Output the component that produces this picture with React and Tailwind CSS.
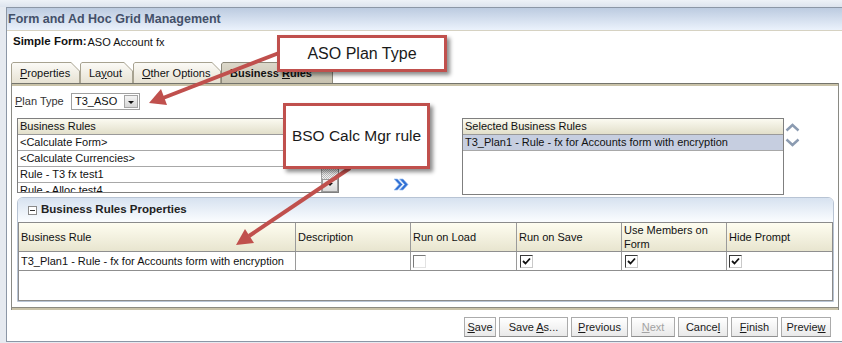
import React from 'react'

function Tab({ className, active, children }) {
  return (
    <div
      className={`h-[21px] p-px pb-0 [clip-path:polygon(0_2px,2px_0,calc(100%_-_9px)_0,100%_9px,100%_100%,0_100%)] ${
        active ? 'bg-[#8d897a]' : 'bg-[#a7a290]'
      } ${className}`}
    >
      <div
        className={`h-full flex items-center pl-[8px] [clip-path:polygon(0_1px,1px_0,calc(100%_-_8px)_0,100%_8px,100%_100%,0_100%)] bg-linear-to-b ${
          active ? 'from-[#dcd8ca] to-[#c8c2b0] font-bold' : 'from-[#fbfaf6] to-[#e7e2d3]'
        }`}
      >
        {children}
      </div>
    </div>
  )
}

function Check({ on }) {
  return (
    <div
      className={`w-[13px] h-[13px] bg-white border ${
        on ? 'border-t-[#3a3a3a] border-l-[#3a3a3a] border-r-[#c9c9c9] border-b-[#c9c9c9]' : 'border-t-[#7a7a7a] border-l-[#7a7a7a] border-r-[#e2e2e2] border-b-[#e2e2e2]'
      }`}
    >
      {on && (
        <svg width="11" height="11" viewBox="0 0 11 11">
          <polyline points="2,5 4.5,7.5 9,2.5" fill="none" stroke="#111" strokeWidth="1.8" />
        </svg>
      )}
    </div>
  )
}

function Btn({ className, disabled, children }) {
  return (
    <div
      className={`h-[20px] border border-[#ababab] border-b-[#8f8f8f] bg-linear-to-b from-[#ffffff] to-[#e9e9e9] flex items-center justify-center ${
        disabled ? 'text-[#a3a3a3]' : 'text-[#1a1a1a]'
      } ${className}`}
    >
      <span className="whitespace-pre">{children}</span>
    </div>
  )
}

const listHead =
  'h-[16px] border-b border-[#9a9a9a] bg-linear-to-b from-[#fbfaf1] to-[#e2dfca] pl-[2px] flex items-center'
const listRow = 'h-[16px] border-b border-[#a8a8a8] pl-[2px] flex items-center whitespace-nowrap'

export default function App() {
  return (
    <div className="relative w-[842px] h-[343px] overflow-hidden bg-[#e6eaf0] font-['Liberation_Sans',Arial,sans-serif] text-[11px] text-[#111]">
      {/* top strip */}
      <div className="h-[7px] bg-linear-to-b from-[#eef2f7] to-[#dde4ee]" />

      {/* window */}
      <div className="ml-[6px] h-[335px] border-l border-t border-b border-[#8c97a6] bg-white flex flex-col">
        {/* title */}
        <div className="h-[23px] border-b border-[#d6d2c2] bg-linear-to-b from-[#bccbe0] to-[#ebf2fc] flex items-center pl-[1px]">
          <span className="text-[12.5px] font-bold text-[#435069]">Form and Ad Hoc Grid Management</span>
        </div>

        <div className="h-[22px] flex items-center pl-[6px]">
          <span className="font-bold text-[11.5px]">Simple Form:</span>
          <span className="ml-[1px]">ASO Account fx</span>
        </div>

        {/* tabs */}
        <div className="mt-[9px] pl-[4px] flex items-end">
          <Tab className="w-[69px]">
            <span><u>P</u>roperties</span>
          </Tab>
          <Tab className="w-[53px]">
            <span>La<u>y</u>out</span>
          </Tab>
          <Tab className="w-[88px]">
            <span><u>O</u>ther Options</span>
          </Tab>
          <Tab className="w-[112px]" active>
            <span>Business <u>R</u>ules</span>
          </Tab>
        </div>

        {/* tab panel */}
        <div className="ml-[4px] w-[828px] border-x border-[#8a8a84] flex flex-col">
          <div className="h-px bg-[#74746c]" />
          <div className="h-[2px] bg-[#c9c2a8]" />

          <div className="mt-[7px] ml-[3px] h-[17px] flex items-center">
            <span className="w-[56px] text-[#333]"><u>P</u>lan Type</span>
            <div className="w-[69px] h-[17px] border border-[#a0a0a0] flex items-center">
              <span className="flex-1 pl-[3px]">T3_ASO</span>
              <div className="w-[14px] h-[13px] mr-px border border-[#a5a5a5] bg-linear-to-b from-[#f4f4f4] to-[#d6d6d6] flex items-center justify-center">
                <div className="w-0 h-0 border-x-[3px] border-x-transparent border-t-[3px] border-t-[#111] mt-[2px]" />
              </div>
            </div>
          </div>

          {/* lists */}
          <div className="mt-[8px] ml-[5px] flex items-start">
            <div className="w-[322px] h-[75px] border border-[#7f7f7f] flex flex-col overflow-hidden">
              <div className={listHead}>Business Rules</div>
              <div className="flex flex-1 min-h-0">
                <div className="flex-1 border-r border-[#a0a0a0]">
                  <div className={listRow}>&lt;Calculate Form&gt;</div>
                  <div className={listRow}>&lt;Calculate Currencies&gt;</div>
                  <div className={listRow}>Rule - T3 fx test1</div>
                  <div className={listRow}>Rule - Alloc test4</div>
                </div>
                <div className="w-[16px] flex flex-col">
                  <div className="flex-1 [background:repeating-conic-gradient(#bdbdbd_0%_25%,#f2f2f2_0%_50%)_0_0/2px_2px]" />
                  <div className="h-[13px] border border-[#9a9a9a] bg-linear-to-b from-[#f3f3f3] to-[#d9d9d9] flex justify-center pt-[3px]">
                    <div className="w-0 h-0 border-x-[3px] border-x-transparent border-t-[3px] border-t-[#111]" />
                  </div>
                </div>
              </div>
            </div>

            <div className="w-[123px] h-[75px] flex items-end justify-center pb-[2px]">
              <svg width="16" height="13" viewBox="0 0 16 13">
                <path d="M1 1 L4.5 1 L9.5 6.5 L4.5 12 L1 12 L6 6.5 Z" fill="#2f6fd4" stroke="#9cc0f0" strokeWidth="0.7" />
                <path d="M6.5 1 L10 1 L15 6.5 L10 12 L6.5 12 L11.5 6.5 Z" fill="#2f6fd4" stroke="#9cc0f0" strokeWidth="0.7" />
              </svg>
            </div>

            <div className="w-[322px] h-[77px] border border-[#7f7f7f] flex flex-col overflow-hidden">
              <div className={listHead}>Selected Business Rules</div>
              <div className={`${listRow} bg-[#c6cee0]`}>T3_Plan1 - Rule - fx for Accounts form with encryption</div>
            </div>

            <div className="ml-[1px] pt-[5px] flex flex-col gap-[6px]">
              <svg width="15" height="9" viewBox="0 0 15 9">
                <path d="M1.5 7.5 L7.5 2 L13.5 7.5" fill="none" stroke="#8b9bb1" strokeWidth="2.4" />
              </svg>
              <svg width="15" height="9" viewBox="0 0 15 9">
                <path d="M1.5 1.5 L7.5 7 L13.5 1.5" fill="none" stroke="#8b9bb1" strokeWidth="2.4" />
              </svg>
            </div>
          </div>

          {/* properties panel */}
          <div className="mt-[2px] ml-[5px] w-[817px] border border-[#b8c4d4] rounded-t-[6px] flex flex-col overflow-hidden">
            <div className="h-[24px] bg-linear-to-b from-[#d7e2f0] to-[#fbfdff] flex items-center pl-[10px] gap-[4px]">
              <div className="w-[9px] h-[9px] border border-[#8a8a8a] bg-white flex items-center justify-center">
                <div className="w-[5px] h-px bg-[#333]" />
              </div>
              <span className="font-bold text-[11.5px] text-[#222]">Business Rules Properties</span>
            </div>

            <div className="h-[79px] border border-[#8b8b8b] flex flex-col">
              <div className="grid grid-cols-[277px_115px_106px_105px_105px_105px] h-[29px] border-b border-[#8f8f8f] bg-linear-to-b from-[#fefdf0] to-[#e8e5cf]">
                <div className="border-r border-[#9a9a9a] pl-[2px] flex items-center">Business Rule</div>
                <div className="border-r border-[#9a9a9a] pl-[2px] flex items-center">Description</div>
                <div className="border-r border-[#9a9a9a] pl-[2px] flex items-center">Run on Load</div>
                <div className="border-r border-[#9a9a9a] pl-[2px] flex items-center">Run on Save</div>
                <div className="border-r border-[#9a9a9a] pl-[2px] flex items-center leading-[14px]">Use Members on<br />Form</div>
                <div className="pl-[2px] flex items-center">Hide Prompt</div>
              </div>
              <div className="grid grid-cols-[277px_115px_106px_105px_105px_105px] h-[19px] border-b border-[#8f8f8f]">
                <div className="border-r border-[#9a9a9a] pl-[2px] flex items-center whitespace-nowrap">T3_Plan1 - Rule - fx for Accounts form with encryption</div>
                <div className="border-r border-[#9a9a9a]" />
                <div className="border-r border-[#9a9a9a] pl-[2px] flex items-center"><Check /></div>
                <div className="border-r border-[#9a9a9a] pl-[3px] flex items-center"><Check on /></div>
                <div className="border-r border-[#9a9a9a] pl-[3px] flex items-center"><Check on /></div>
                <div className="pl-[2px] flex items-center"><Check on /></div>
              </div>
            </div>
          </div>

          <div className="h-[5px]" />
          <div className="h-px bg-[#8c8a80]" />
          <div className="h-[2px] bg-[#c9c2a8]" />
        </div>

        {/* buttons */}
        <div className="mt-[7px] pr-[11px] flex justify-end gap-[3px]">
          <Btn className="w-[32px]"><u>S</u>ave</Btn>
          <Btn className="w-[69px]">Save <u>A</u>s...</Btn>
          <Btn className="w-[57px]"><u>P</u>revious</Btn>
          <Btn className="w-[44px]" disabled><u>N</u>ext</Btn>
          <Btn className="w-[50px]">Cance<u>l</u></Btn>
          <Btn className="w-[47px]"><u>F</u>inish</Btn>
          <Btn className="w-[50px]">Previe<u>w</u></Btn>
        </div>
      </div>

      {/* annotation arrows */}
      <svg className="absolute inset-0 pointer-events-none" width="842" height="343" viewBox="0 0 842 343">
        <line x1="279" y1="53" x2="163" y2="98" stroke="#c0504d" strokeWidth="4" />
        <polygon points="149,103 167,105 161,89" fill="#c0504d" />
        <line x1="350" y1="168" x2="249" y2="236" stroke="#c0504d" strokeWidth="4" />
        <polygon points="236,245 254,243 245,229" fill="#c0504d" />
      </svg>

      {/* callouts */}
      <div className="absolute left-[277px] top-[35px] w-[170px] h-[37px] border-[3px] border-[#c0504d] bg-white shadow-[3px_3px_4px_rgba(0,0,0,0.45)] flex items-center justify-center text-[16px] text-[#1a1a1a]">
        ASO Plan Type
      </div>
      <div className="absolute left-[283px] top-[103px] w-[147px] h-[66px] border-[3px] border-[#c0504d] bg-white shadow-[3px_3px_4px_rgba(0,0,0,0.45)] flex items-center justify-center text-[15.5px] text-[#1a1a1a]">
        BSO Calc Mgr rule
      </div>
    </div>
  )
}
